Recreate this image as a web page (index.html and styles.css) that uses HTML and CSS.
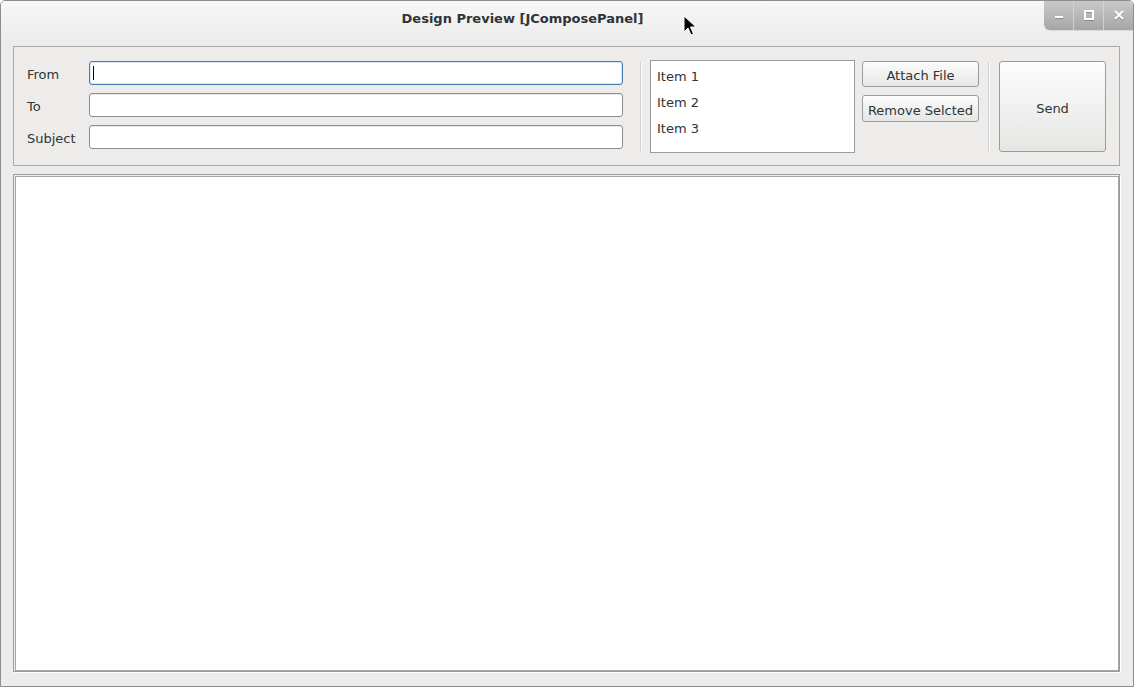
FILE: index.html
```html
<!DOCTYPE html>
<html>
<head>
<meta charset="utf-8">
<title>Design Preview [JComposePanel]</title>
<link rel="stylesheet" href="styles.css">
</head>
<body>
<div class="window">
  <div class="titlebar">
    <div class="title">Design Preview [JComposePanel]</div>
    <div class="wm-buttons">
      <div class="wm-btn">
        <svg width="10" height="10" viewBox="0 0 10 10"><rect x="1" y="6" width="8" height="2" fill="#fff"/></svg>
      </div>
      <div class="wm-btn">
        <svg width="10" height="10" viewBox="0 0 10 10"><rect x="1" y="1" width="8" height="8" fill="none" stroke="#fff" stroke-width="2"/></svg>
      </div>
      <div class="wm-btn">
        <svg width="10" height="10" viewBox="0 0 10 10"><path d="M1 1 L9 9 M9 1 L1 9" stroke="#fff" stroke-width="2"/></svg>
      </div>
    </div>
  </div>
  <div class="content">
    <div class="header-panel">
      <div class="fields">
        <label class="lbl">From</label>
        <div class="input focused"><span class="caret"></span></div>
        <label class="lbl">To</label>
        <div class="input"></div>
        <label class="lbl">Subject</label>
        <div class="input"></div>
      </div>
      <div class="vsep sep1"></div>
      <div class="list">
        <div class="list-item">Item 1</div>
        <div class="list-item">Item 2</div>
        <div class="list-item">Item 3</div>
      </div>
      <div class="btn-col">
        <button class="btn btn-attach">Attach File</button>
        <button class="btn btn-remove">Remove Selcted</button>
      </div>
      <div class="vsep sep2"></div>
      <button class="btn btn-send">Send</button>
    </div>
    <div class="body-area"></div>
  </div>
  <svg class="cursor" width="14" height="22" viewBox="0 0 14 22">
    <path d="M1 1 L1 17 L5 13 L8 20 L10.5 19 L7.5 12 L13 12 Z" fill="#000" stroke="#fff" stroke-width="1"/>
  </svg>
</div>
</body>
</html>
```

FILE: styles.css
```css
* { box-sizing: border-box; }
html, body { margin: 0; padding: 0; background: #ffffff; }
body {
  font-family: "DejaVu Sans", "Noto Sans", sans-serif;
  font-size: 13px;
  color: #2e3436;
}
.window {
  position: relative;
  width: 1134px;
  height: 687px;
  border: 1px solid #8d8d8d;
  border-radius: 5px 5px 0 0;
  background: #edeceb;
  display: flex;
  flex-direction: column;
  overflow: hidden;
}
.titlebar {
  height: 45px;
  flex: none;
  display: flex;
  align-items: flex-start;
  background: linear-gradient(#f7f7f7, #ecebea);
}
.title {
  flex: 1;
  text-align: center;
  font-weight: bold;
  font-size: 13px;
  line-height: 18px;
  padding-top: 9px;
  color: #2e3436;
}
.wm-buttons {
  display: flex;
  height: 29px;
  border-radius: 0 0 0 6px;
  overflow: hidden;
  background: linear-gradient(#c9c9c9, #a6a6a6);
  box-shadow: 0 1px 0 #d8d8d8;
}
.wm-btn {
  width: 30px;
  display: flex;
  align-items: center;
  justify-content: center;
  border-left: 1px solid #d2d2d2;
  padding-bottom: 2px;
}
.wm-btn:first-child { border-left: none; width: 29px; }
.wm-btn svg { filter: drop-shadow(0 1px 0 rgba(0,0,0,0.25)); }
.content {
  flex: 1;
  display: flex;
  flex-direction: column;
  padding: 0 13px 14px 12px;
  gap: 8px;
}
.header-panel {
  height: 120px;
  flex: none;
  border: 1px solid #a9a9a9;
  display: flex;
  align-items: flex-start;
  padding: 14px 13px 0 13px;
}
.fields {
  display: grid;
  grid-template-columns: 62px 534px;
  grid-auto-rows: 24px;
  row-gap: 8px;
}
.lbl {
  line-height: 18px;
  padding-top: 5px;
  color: #2e3436;
}
.input {
  position: relative;
  background: #fff;
  border: 1px solid #8e8e8e;
  border-radius: 3px;
  box-shadow: inset 0 1px 0 #eaeaea;
}
.input.focused {
  border-color: #4a7bb7;
  box-shadow: inset 0 0 0 1px #dbe6f3;
}
.caret {
  position: absolute;
  left: 3px;
  top: 4px;
  width: 1px;
  height: 14px;
  background: #000;
}
.vsep {
  width: 2px;
  height: 89px;
  margin-top: 1px;
  border-left: 1px solid #cfcfcf;
  border-right: 1px solid #fafafa;
}
.sep1 { margin-left: 17px; margin-right: 8px; }
.sep2 { margin-left: 9px; margin-right: 9px; }
.list {
  width: 205px;
  height: 93px;
  margin-top: -1px;
  background: #fff;
  border: 1px solid #9b9b9b;
  padding: 3px 6px 0 6px;
}
.list-item {
  line-height: 26px;
  color: #2e3436;
}
.btn-col {
  margin-left: 7px;
  width: 117px;
  display: flex;
  flex-direction: column;
  gap: 8px;
}
.btn {
  font-family: "DejaVu Sans", "Noto Sans", sans-serif;
  font-size: 13px;
  color: #2e3436;
  border: 1px solid #9b9b9b;
  border-radius: 3px;
  background: linear-gradient(#fcfcfc, #e6e6e5);
  padding: 0;
  margin: 0;
  text-align: center;
  box-shadow: inset 0 1px 0 #ffffff;
}
.btn-attach { height: 26px; line-height: 20px; padding-top: 4px; }
.btn-remove { height: 27px; line-height: 20px; padding-top: 4px; }
.btn-send {
  width: 107px;
  height: 91px;
  background: linear-gradient(#fdfdfd, #e5e5e4);
  padding-top: 3px;
}
.body-area {
  flex: 1;
  background: #fff;
  border: 1px solid #9c9c9c;
  box-shadow: inset 1px 1px 0 #f0f0f0, inset 2px 2px 0 #a6a6a6, inset -1px -1px 0 #a6a6a6, 1px 1px 0 #ffffff;
}
.cursor {
  position: absolute;
  left: 682px;
  top: 14px;
}
```
